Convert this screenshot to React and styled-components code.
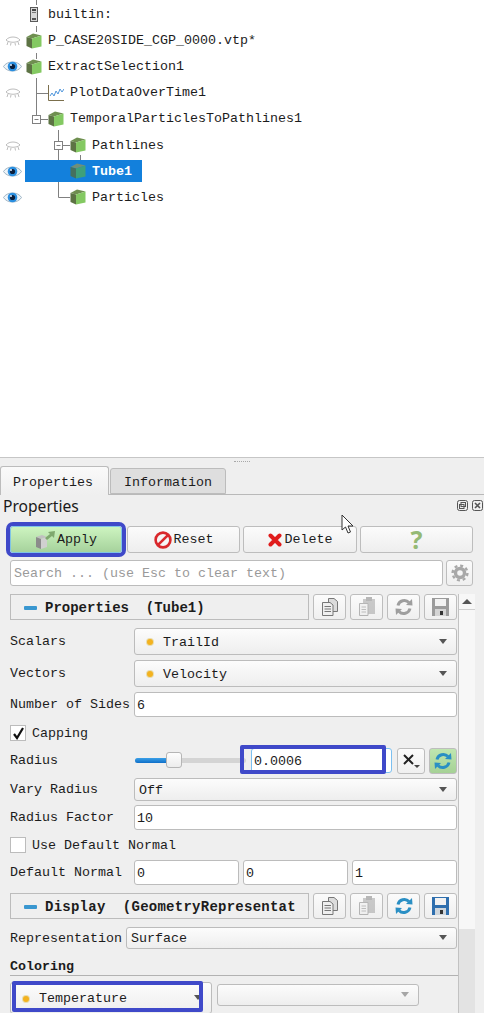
import React from "react";
import styled, { createGlobalStyle } from "styled-components";

const Global = createGlobalStyle`
  html, body { margin: 0; padding: 0; background: #fff; }
  body { width: 484px; height: 1013px; overflow: hidden; font-family: "Liberation Mono", "DejaVu Sans Mono", monospace; font-size: 13.33px; color: #1c1c1c; }
  * { box-sizing: border-box; }
`;

const Page = styled.div`
  position: relative;
  width: 484px;
  height: 1013px;
  overflow: hidden;
`;

/* ---------- pipeline tree ---------- */
const Tree = styled.div`
  position: relative;
  height: 457px;
  padding-top: 1.5px;
  background: #fff;
`;
const TreeLines = styled.svg`
  position: absolute;
  left: 0;
  top: 0;
  z-index: 1;
`;
const TreeRow = styled.div`
  position: relative;
  display: flex;
  align-items: center;
  height: 26.1px;
`;
const EyeSlot = styled.div`
  width: 25px;
  height: 16px;
  flex: none;
  display: flex;
  align-items: center;
  justify-content: center;
`;
const TreeNode = styled.div`
  position: relative;
  z-index: 2;
  display: flex;
  align-items: center;
  gap: 6px;
  height: 22px;
  padding: 0 10px 0 ${(p) => p.$indent + 1}px;
  background: ${(p) => (p.$selected ? "#1380dc" : "transparent")};
  color: ${(p) => (p.$selected ? "#fff" : "#1c1c1c")};
  font-weight: ${(p) => (p.$selected ? 700 : 400)};
  white-space: pre;
`;

const Cube = ({ selected }) => (
  <svg width="16" height="16" viewBox="0 0 16 16">
    <path d="M0.5 4 L7 0.5 L15.5 2.5 L6 5.5 Z" fill={selected ? "#6f8f7a" : "#6f8f50"} />
    <path d="M0.5 4 L6 5.5 V15.5 L0.5 13 Z" fill={selected ? "#45705f" : "#5d7344"} />
    <path d="M6 5.5 L15.5 2.5 V13.5 L6 15.5 Z" fill={selected ? "#3fa07a" : "#84c962"} />
  </svg>
);
const ServerIcon = () => (
  <svg width="16" height="16" viewBox="0 0 16 16">
    <rect x="4" y="0" width="8" height="15" fill="#5a5a5a" />
    <rect x="5" y="1" width="6" height="13" fill="#d8d8d8" />
    <rect x="6" y="2" width="4" height="2" fill="#444" />
    <rect x="6" y="5" width="4" height="1" fill="#777" />
    <rect x="6" y="11" width="4" height="2" fill="#555" />
  </svg>
);
const PlotIcon = () => (
  <svg width="16" height="16" viewBox="0 0 16 16" fill="none">
    <path d="M0.5 0 V15.5 H16" stroke="#7b6f4c" />
    <path d="M2 11 L4 8 L6 11 L8 6 L10 9 L12 4 L14 7 L16 4" stroke="#4f96dc" />
  </svg>
);
const Eye = ({ open }) =>
  open ? (
    <svg width="19" height="13" viewBox="0 0 19 13">
      <path d="M0.5 6.5 C4 0.5 15 0.5 18.5 6.5 C15 12.5 4 12.5 0.5 6.5 Z" fill="#eef4f9" stroke="#9fb4c4" />
      <circle cx="9.5" cy="6.5" r="4.8" fill="#2b8fe0" />
      <circle cx="9.5" cy="6.5" r="2.6" fill="#0c1f3c" />
      <circle cx="8" cy="5" r="1" fill="#dfefff" />
    </svg>
  ) : (
    <svg width="16" height="11" viewBox="0 0 16 11" fill="none" stroke="#bdbdbd">
      <path d="M1 5 C4 1 12 1 15 5 C12 8 4 8 1 5 Z" />
      <path d="M3 7 L2 10 M6 8 L5.5 10.5 M10 8 L10.5 10.5 M13 7 L14 10" />
    </svg>
  );

const treeRows = [
  { indent: 0, label: "builtin:", icon: <ServerIcon /> },
  { indent: 0, label: "P_CASE20SIDE_CGP_0000.vtp*", icon: <Cube />, eye: "closed" },
  { indent: 0, label: "ExtractSelection1", icon: <Cube />, eye: "open" },
  { indent: 22, label: "PlotDataOverTime1", icon: <PlotIcon />, eye: "closed" },
  { indent: 22, label: "TemporalParticlesToPathlines1", icon: <Cube /> },
  { indent: 44, label: "Pathlines", icon: <Cube />, eye: "closed" },
  { indent: 44, label: "Tube1", icon: <Cube selected />, eye: "open", selected: true },
  { indent: 44, label: "Particles", icon: <Cube />, eye: "open" },
];

/* ---------- panel ---------- */
const Panel = styled.div`
  height: 556px;
  background: #efefef;
  border-top: 1px solid #c6c6c6;
  position: relative;
`;
const Grip = styled.div`
  width: 16px;
  margin: 3px auto 0;
  height: 1px;
  border-top: 1px dotted #a8a8a8;
`;
const TabBar = styled.div`
  display: flex;
  align-items: flex-end;
  height: 30px;
  margin-top: 3px;
  border-bottom: 1px solid #b9b9b9;
`;
const Tab = styled.div`
  width: ${(p) => p.$w}px;
  height: ${(p) => (p.$active ? 29 : 26)}px;
  margin-left: ${(p) => (p.$active ? 0 : 1)}px;
  margin-bottom: ${(p) => (p.$active ? -1 : 0)}px;
  display: flex;
  align-items: center;
  justify-content: center;
  padding: 2px ${(p) => (p.$active ? 3 : 0)}px 0 0;
  background: ${(p) => (p.$active ? "linear-gradient(#fafafa,#efefef)" : "#dedede")};
  border: 1px solid #bcbcbc;
  border-bottom: ${(p) => (p.$active ? "none" : "1px solid #bcbcbc")};
  border-radius: 3px 3px 0 0;
`;
const TitleBar = styled.div`
  display: flex;
  align-items: center;
  justify-content: space-between;
  height: 26px;
  padding: 0 1px 5px 3px;
`;
const Title = styled.div`
  font-family: "Noto Sans", sans-serif;
  font-size: 15.6px;
  color: #1a1a1a;
`;
const DockButtons = styled.div`
  display: flex;
  gap: 4px;
`;
const ActionRow = styled.div`
  display: flex;
  gap: 3px;
  margin: 5px 0 0 10px;
  width: 463px;
`;
const ActionButton = styled.div`
  width: ${(p) => p.$w}px;
  height: 27px;
  margin-right: ${(p) => p.$mr || 0}px;
  display: flex;
  align-items: center;
  justify-content: center;
  gap: ${(p) => p.$gap || 2}px;
  border: 1px solid ${(p) => (p.$apply ? "#7fc4e6" : "#bdbdbd")};
  border-radius: 3px;
  background: ${(p) => (p.$apply ? "linear-gradient(#cdf4c0,#a6d29c)" : "linear-gradient(#fbfbfb,#eeeeee)")};
  box-shadow: ${(p) => (p.$apply ? "0 0 0 4px #3f49c9" : "none")};
`;
const HelpGlyph = styled.span`
  font-family: "Noto Sans", sans-serif;
  font-weight: 700;
  font-size: 25px;
  line-height: 1;
  color: #95b974;
`;
const SearchRow = styled.div`
  display: flex;
  gap: 3px;
  margin: 7px 0 0 10px;
  width: 463px;
  height: 26px;
`;
const SearchBox = styled.div`
  flex: 1;
  display: flex;
  align-items: center;
  padding-left: 3px;
  background: #fff;
  border: 1px solid #bcbcbc;
  border-radius: 3px;
  color: #9a9a9a;
`;
const ToolButton = styled.div`
  width: ${(p) => p.$w || 33}px;
  height: ${(p) => p.$h || 26}px;
  margin-left: ${(p) => p.$ml || 0}px;
  flex: none;
  display: flex;
  align-items: center;
  justify-content: center;
  border: 1px solid #bdbdbd;
  border-radius: 3px;
  background: ${(p) => p.$bg || "linear-gradient(#fbfbfb,#efefef)"};
`;
const Scroller = styled.div`
  display: flex;
  margin-top: 8px;
  height: 420px;
`;
const Form = styled.div`
  width: 458px;
  flex: none;
  padding-left: 10px;
`;
const ScrollBar = styled.div`
  width: 17px;
  flex: none;
  display: flex;
  flex-direction: column;
  border-left: 1px solid #c2c2c2;
  background: #e3e3e3;
`;
const ScrollUp = styled.div`
  height: 16px;
  display: flex;
  justify-content: center;
  padding-top: 5px;
  background: #f7f7f7;
  border-bottom: 1px solid #cfcfcf;
  &::before {
    content: "";
    border-left: 5px solid transparent;
    border-right: 5px solid transparent;
    border-bottom: 5px solid #555;
    height: 0;
  }
`;
const ScrollHandle = styled.div`
  height: 319px;
  background: #f7f7f7;
`;
const SectionRow = styled.div`
  display: flex;
  gap: 4px;
  height: 26px;
  margin-top: ${(p) => p.$mt || 0}px;
`;
const SectionHead = styled.div`
  width: 299px;
  margin-right: 0;
  flex: none;
  display: flex;
  align-items: center;
  padding: 1px 0 0 13px;
  gap: 8px;
  border: 1px solid #bcbcbc;
  font-size: 14px;
  font-weight: 700;
  white-space: pre;
  overflow: hidden;
  letter-spacing: ${(p) => p.$track || 0}px;
`;
const Collapse = styled.span`
  width: 13px;
  height: 4px;
  flex: none;
  background: #3a97d0;
  border-radius: 1px;
`;
const Row = styled.div`
  display: flex;
  align-items: center;
  height: ${(p) => p.$h}px;
  margin-top: ${(p) => p.$mt}px;
  white-space: pre;
`;
const Label = styled.div`
  width: ${(p) => p.$w || 124}px;
  flex: none;
`;
const Combo = styled.div`
  position: relative;
  width: ${(p) => p.$w || 323}px;
  height: ${(p) => p.$h || "100%"};
  margin-top: ${(p) => p.$mt || 0}px;
  flex: none;
  display: flex;
  align-items: center;
  padding: 1px 0 0 ${(p) => p.$pad || 4}px;
  margin-left: ${(p) => p.$ml || 0}px;
  gap: 10px;
  background: linear-gradient(#fcfcfc, #eeeeee);
  border: 1px solid #bcbcbc;
  border-radius: 3px;
  &::after {
    content: "";
    position: absolute;
    right: 9px;
    top: 50%;
    margin-top: -3px;
    border-left: 4.5px solid transparent;
    border-right: 4.5px solid transparent;
    border-top: 5px solid ${(p) => (p.$disabled ? "#a6a6a6" : "#555")};
  }
`;
const Dot = styled.span`
  width: 6px;
  height: 6px;
  flex: none;
  border-radius: 50%;
  background: #f3b21f;
  box-shadow: 0 0 0 1px #e8dcae;
`;
const Field = styled.div`
  width: ${(p) => p.$w || 323}px;
  height: 100%;
  flex: none;
  display: flex;
  align-items: center;
  padding: 2px 0 0 2px;
  margin-left: ${(p) => p.$ml || 0}px;
  background: #fff;
  border: 1px solid ${(p) => p.$focus || "#bcbcbc"};
  border-radius: 3px;
`;
const CheckBox = styled.div`
  width: 16px;
  height: 16px;
  flex: none;
  margin-right: 6px;
  display: flex;
  align-items: center;
  justify-content: center;
  background: #fff;
  border: 1px solid #bcbcbc;
`;
const SliderTrack = styled.div`
  position: relative;
  width: 111px;
  height: 5px;
  margin-right: 5px;
  flex: none;
  border-radius: 3px;
  background: #d4d4d4;
`;
const SliderFill = styled.div`
  height: 100%;
  border-radius: 3px 0 0 3px;
  background: linear-gradient(#3aa0e8, #0f6fc8);
`;
const SliderThumb = styled.div`
  position: absolute;
  left: 31px;
  top: -6px;
  width: 16px;
  height: 16px;
  background: linear-gradient(#fdfdfd, #ececec);
  border: 1px solid #b5b5b5;
  border-radius: 3px;
`;
const Heading = styled.div`
  display: flex;
  align-items: center;
  height: 18px;
  margin-top: 8px;
  font-weight: 700;
`;
const Rule = styled.div`
  height: 1px;
  margin-right: -2px;
  background: #b2b2b2;
`;
const Annotation = styled.div`
  position: absolute;
  left: ${(p) => p.$x}px;
  top: ${(p) => p.$y}px;
  width: ${(p) => p.$w}px;
  height: ${(p) => p.$h}px;
  border: 4px solid #3f49c9;
  border-radius: 2px;
  pointer-events: none;
`;
const Cursor = styled.svg`
  position: absolute;
  left: 341px;
  top: 514px;
`;

/* ---------- drawn icons ---------- */
const CopyIcon = () => (
  <svg width="18" height="20" viewBox="0 0 18 20" fill="#efefef" stroke="#777">
    <path d="M7.5 1.5 H13 L16.5 4.5 V14.5 H7.5 Z" fill="#dcdcdc" />
    <path d="M1.5 5.5 H9 L12 8 V18.5 H1.5 Z" />
    <path d="M3.5 9.5 H10 M3.5 12 H10 M3.5 14.5 H10" />
  </svg>
);
const PasteIcon = () => (
  <svg width="18" height="20" viewBox="0 0 18 20" opacity="0.5">
    <rect x="5" y="2" width="12" height="15" fill="#9b9b9b" />
    <rect x="8" y="0" width="6" height="4" fill="#777" />
    <path d="M1.5 6.5 H10 V18.5 H1.5 Z" fill="#eee" stroke="#777" />
    <path d="M3.5 10 H8 M3.5 12.5 H8 M3.5 15 H8" stroke="#888" />
  </svg>
);
const RefreshIcon = ({ color = "#9e9e9e", size = 18 }) => (
  <svg width={size} height={size} viewBox="0 0 18 18" fill="none" stroke={color} strokeWidth="3">
    <path d="M3 7.5 A6.5 6.5 0 0 1 14 4.5" />
    <path d="M15 10.5 A6.5 6.5 0 0 1 4 13.5" />
    <path d="M11 7 L17.5 7.5 L17 1 Z" fill={color} stroke="none" />
    <path d="M7 11 L0.5 10.5 L1 17 Z" fill={color} stroke="none" />
  </svg>
);
const SaveIcon = ({ active }) => (
  <svg width="18" height="19" viewBox="0 0 18 19">
    <rect x="0" y="0" width="17" height="18" fill={active ? "#2f6fae" : "#9b9b9b"} />
    <rect x="3" y="1" width="11" height="7" fill="#f2f2f2" />
    <rect x="3" y="11" width="11" height="7" fill={active ? "#cfd6dc" : "#d4d4d4"} />
    <rect x="8" y="13" width="3" height="4" fill="#333" />
  </svg>
);
const ApplyIcon = () => (
  <svg width="20" height="20" viewBox="0 0 20 20">
    <path d="M1 7 L7 5 L12 7 L6 9 Z" fill="#c0c0c0" />
    <path d="M1 7 L6 9 V19 L1 17 Z" fill="#8b8b8b" />
    <path d="M6 9 L12 7 V17 L6 19 Z" fill="#d0d0d0" />
    <path d="M10 8 L15 4 L13 2 L20 1 L19 8 L17 6 L12 10 Z" fill="#7fa86e" />
  </svg>
);
const ResetIcon = () => (
  <svg width="18" height="18" viewBox="0 0 18 18" fill="none" stroke="#d9282c" strokeWidth="2.6">
    <circle cx="9" cy="9" r="7.4" fill="#f6f6f6" />
    <path d="M3.8 14.2 L14.2 3.8" />
  </svg>
);
const DeleteIcon = () => (
  <svg width="14" height="14" viewBox="0 0 14 14" stroke="#e01c1c" strokeWidth="4" strokeLinecap="round">
    <path d="M2.5 2.5 L11.5 11.5 M11.5 2.5 L2.5 11.5" />
  </svg>
);
const GearIcon = () => (
  <svg width="18" height="18" viewBox="0 0 18 18" fill="none" stroke="#a8a8a8">
    <circle cx="9" cy="9" r="4.5" strokeWidth="3.4" />
    <circle cx="9" cy="9" r="7.4" strokeWidth="2.4" strokeDasharray="3 2.8" />
  </svg>
);
const DockIcon = ({ close }) => (
  <svg width="11" height="11" viewBox="0 0 11 11" fill="none" stroke="#555">
    <rect x="0.5" y="0.5" width="10" height="10" rx="2" />
    {close ? (
      <path d="M3 3 L8 8 M8 3 L3 8" strokeWidth="1.6" />
    ) : (
      <>
        <rect x="4" y="2.5" width="4.5" height="4" />
        <rect x="2.5" y="4.5" width="4.5" height="4" />
      </>
    )}
  </svg>
);
const CheckMark = () => (
  <svg width="13" height="13" viewBox="0 0 13 13" fill="none" stroke="#111" strokeWidth="2.2">
    <path d="M2 7 L5 11 L11 1" />
  </svg>
);
const ScaleIcon = () => (
  <svg width="18" height="16" viewBox="0 0 18 16" fill="none" stroke="#222" strokeWidth="2">
    <path d="M2 2 L11 11 M11 2 L2 11" />
    <path d="M12 12 H18 L15 15 Z" fill="#444" stroke="none" />
  </svg>
);

export default function App() {
  return (
    <Page>
      <Global />
      <Tree>
        <TreeLines width="200" height="210" fill="none" stroke="#808080">
          <path d="M36.5 0 V5 M36.5 26 V32 M36.5 53 V59 M36.5 78 V115 M36.5 93.5 H48 M40 119.5 H48" />
          <path d="M58.5 130 V141 M58.5 149 V197.5 H70 M62 145.5 H70" />
          <rect x="32.5" y="115.5" width="8" height="8" fill="#fff" />
          <path d="M34.5 119.5 H38.5" />
          <rect x="54.5" y="141.5" width="8" height="8" fill="#fff" />
          <path d="M56.5 145.5 H60.5" />
          <path d="M80.5 155 V162" />
        </TreeLines>
        {treeRows.map((r) => (
          <TreeRow key={r.label}>
            <EyeSlot>{r.eye && <Eye open={r.eye === "open"} />}</EyeSlot>
            <TreeNode $indent={r.indent} $selected={r.selected}>
              {r.icon}
              <span>{r.label}</span>
            </TreeNode>
          </TreeRow>
        ))}
      </Tree>
      <Panel>
        <Grip />
        <TabBar>
          <Tab $w={109} $active>Properties</Tab>
          <Tab $w={116}>Information</Tab>
        </TabBar>
        <TitleBar>
          <Title>Properties</Title>
          <DockButtons>
            <DockIcon />
            <DockIcon close />
          </DockButtons>
        </TitleBar>
        <ActionRow>
          <ActionButton $w={112} $apply $mr={2}><ApplyIcon /><span>Apply</span></ActionButton>
          <ActionButton $w={113}><ResetIcon /><span>Reset</span></ActionButton>
          <ActionButton $w={114} $gap={3}><DeleteIcon /><span>Delete</span></ActionButton>
          <ActionButton $w={113}><HelpGlyph>?</HelpGlyph></ActionButton>
        </ActionRow>
        <SearchRow>
          <SearchBox>Search ... (use Esc to clear text)</SearchBox>
          <ToolButton $w={27}><GearIcon /></ToolButton>
        </SearchRow>
        <Scroller>
          <Form>
            <SectionRow>
              <SectionHead><Collapse /><span>Properties  (Tube1)</span></SectionHead>
              <ToolButton><CopyIcon /></ToolButton>
              <ToolButton><PasteIcon /></ToolButton>
              <ToolButton><RefreshIcon /></ToolButton>
              <ToolButton><SaveIcon /></ToolButton>
            </SectionRow>
            <Row $h={27} $mt={8}>
              <Label>Scalars</Label>
              <Combo $pad={12}><Dot /><span>TrailId</span></Combo>
            </Row>
            <Row $h={27} $mt={5}>
              <Label>Vectors</Label>
              <Combo $pad={12}><Dot /><span>Velocity</span></Combo>
            </Row>
            <Row $h={25} $mt={5}>
              <Label>Number of Sides</Label>
              <Field>6</Field>
            </Row>
            <Row $h={16} $mt={8}>
              <CheckBox><CheckMark /></CheckBox>
              <span>Capping</span>
            </Row>
            <Row $h={25} $mt={7}>
              <Label $w={125}>Radius</Label>
              <SliderTrack>
                <SliderFill style={{ width: "28%" }} />
                <SliderThumb />
              </SliderTrack>
              <Field $w={141} $focus="#7cc0f0">0.0006</Field>
              <ToolButton $w={28} $ml={5}><ScaleIcon /></ToolButton>
              <ToolButton $w={28} $ml={4} $bg="linear-gradient(#bfe6b0,#a5d195)"><RefreshIcon color="#2a8fc4" /></ToolButton>
            </Row>
            <Row $h={23} $mt={5}>
              <Label>Vary Radius</Label>
              <Combo>Off</Combo>
            </Row>
            <Row $h={25} $mt={4}>
              <Label>Radius Factor</Label>
              <Field>10</Field>
            </Row>
            <Row $h={16} $mt={7}>
              <CheckBox />
              <span>Use Default Normal</span>
            </Row>
            <Row $h={25} $mt={7}>
              <Label>Default Normal</Label>
              <Field $w={105}>0</Field>
              <Field $w={105} $ml={4}>0</Field>
              <Field $w={105} $ml={4}>1</Field>
            </Row>
            <SectionRow $mt={8}>
              <SectionHead $track={0.25}><Collapse /><span>Display  (GeometryRepresentat</span></SectionHead>
              <ToolButton><CopyIcon /></ToolButton>
              <ToolButton><PasteIcon /></ToolButton>
              <ToolButton><RefreshIcon color="#2a8fc4" /></ToolButton>
              <ToolButton><SaveIcon active /></ToolButton>
            </SectionRow>
            <Row $h={22} $mt={8}>
              <Label $w={116}>Representation</Label>
              <Combo $w={331}>Surface</Combo>
            </Row>
            <Heading>Coloring</Heading>
            <Rule />
            <Row $h={32} $mt={6}>
              <Combo $w={202} $pad={12}><Dot /><span>Temperature</span></Combo>
              <Combo $w={202} $ml={5} $disabled $h="22px" $mt={-6} />
            </Row>
          </Form>
          <ScrollBar>
            <ScrollUp />
            <ScrollHandle />
          </ScrollBar>
        </Scroller>
      </Panel>
      <Annotation $x={240} $y={745} $w={146} $h={29} />
      <Annotation $x={12} $y={981} $w={191} $h={31} />
      <Cursor width="14" height="21" viewBox="0 0 14 21">
        <path d="M1 1 V16 L4.5 13 L7 19 L9.5 18 L7 12 L12 12 Z" fill="#fff" stroke="#333" />
      </Cursor>
    </Page>
  );
}
